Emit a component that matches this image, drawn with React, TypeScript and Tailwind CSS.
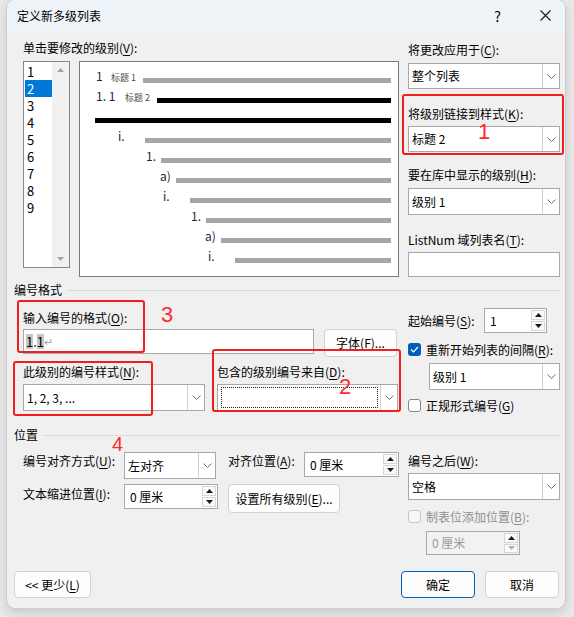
import type { ReactNode } from 'react'

const font = "font-['Noto_Sans_CJK_SC','Noto_Sans',sans-serif]"

// access key letter, underlined like the Win32 dialog
function K({ c }: { c: string }) {
  return <span className="underline underline-offset-[2px] decoration-1">{c}</span>
}

function Lbl({ children, className = '' }: { children: ReactNode; className?: string }) {
  return <div className={`h-[16px] leading-[16px] text-[12px] whitespace-nowrap ${className}`}>{children}</div>
}

function Chevron() {
  return (
    <svg width="9" height="5" viewBox="0 0 9 5">
      <polyline points="0.5 0.5 4.5 4.5 8.5 0.5" fill="none" stroke="#6e6e6e" strokeWidth="1" />
    </svg>
  )
}

function Combo({ value, className = '', focus = false }: { value?: string; className?: string; focus?: boolean }) {
  return (
    <div className={`flex bg-white border border-[#a8a8a8] ${className}`}>
      <div className="flex-1 flex items-center p-[2px] pl-[3px] text-[12px]">
        {focus ? <div className="w-full h-full border border-dotted border-[#222]" /> : value}
      </div>
      <div className="w-[17px] shrink-0 border-l border-[#d0d0d0] flex items-center justify-center">
        <Chevron />
      </div>
    </div>
  )
}

function Tri({ up, color = '#1a1a1a' }: { up?: boolean; color?: string }) {
  return (
    <svg width="7" height="4" viewBox="0 0 7 4">
      <polygon points={up ? '0,4 7,4 3.5,0' : '0,0 7,0 3.5,4'} fill={color} />
    </svg>
  )
}

function Spin({ value, className = '', disabled = false }: { value: string; className?: string; disabled?: boolean }) {
  return (
    <div className={`flex border border-[#a8a8a8] ${disabled ? 'bg-[#f2f2f2] text-[#9a9a9a]' : 'bg-white'} ${className}`}>
      <div className="flex-1 flex items-center pl-[5px] text-[12px]">{value}</div>
      <div className="w-[16px] flex flex-col gap-px p-px">
        <div className="flex-1 border border-[#d6d6d6] bg-[#fafafa] flex items-center justify-center"><Tri up /></div>
        <div className="flex-1 border border-[#d6d6d6] bg-[#fafafa] flex items-center justify-center">
          <Tri color={disabled ? '#b0b0b0' : '#1a1a1a'} />
        </div>
      </div>
    </div>
  )
}

function Check({ checked = false, disabled = false }: { checked?: boolean; disabled?: boolean }) {
  if (checked)
    return (
      <div className="w-[13px] h-[13px] rounded-[3px] bg-[#005fb8] flex items-center justify-center shrink-0">
        <svg width="9" height="7" viewBox="0 0 9 7">
          <polyline points="1 3.5 3.5 6 8 1" fill="none" stroke="white" strokeWidth="1.2" />
        </svg>
      </div>
    )
  return (
    <div className={`w-[13px] h-[13px] rounded-[3px] border shrink-0 ${disabled ? 'border-[#c6c6c6] bg-[#f7f7f7]' : 'border-[#858585] bg-white'}`} />
  )
}

function Btn({ children, className = '', primary = false }: { children: ReactNode; className?: string; primary?: boolean }) {
  return (
    <div className={`flex items-center justify-center bg-[#fdfdfd] border rounded-[4px] text-[12px] whitespace-nowrap ${primary ? 'border-[#005fb8]' : 'border-[#d2d2d2]'} ${className}`}>
      {children}
    </div>
  )
}

function Group({ title, className = '' }: { title: string; className?: string }) {
  return (
    <div className={`flex items-center pl-[7px] pr-[5px] h-[16px] ${className}`}>
      <span className="text-[12px] leading-[16px]">{title}</span>
      <div className="flex-1 h-px bg-[#dadada] ml-[5px]" />
    </div>
  )
}

function LevelList() {
  const levels = [1, 2, 3, 4, 5, 6, 7, 8, 9]
  return (
    <div className="w-[47px] h-[207px] bg-white border border-[#828790] flex">
      <div className="w-[28px] pt-px pl-px flex flex-col">
        {levels.map(n => (
          <div key={n} className={`h-[17px] leading-[17px] pl-[2px] text-[13px] ${n === 2 ? 'bg-[#0078d7] text-white' : ''}`}>{n}</div>
        ))}
      </div>
      <div className="w-[17px] bg-[#f0f0f0] flex flex-col justify-between items-center pt-[6px] pb-[6px]">
        <Tri up color="#a3a3a3" />
        <Tri color="#a3a3a3" />
      </div>
    </div>
  )
}

const rows = [
  { pl: 'pl-[16px]', num: '1', nw: 'w-[15px]', tag: '标题 1', black: false },
  { pl: 'pl-[16px]', num: '1. 1', nw: 'w-[29px]', tag: '标题 2', black: true },
  { pl: 'pl-[15px]', num: '', nw: '', tag: '', black: true },
  { pl: 'pl-[38px]', num: 'i.', nw: 'w-[27px]', tag: '', black: false },
  { pl: 'pl-[66px]', num: '1.', nw: 'w-[15px]', tag: '', black: false },
  { pl: 'pl-[80px]', num: 'a)', nw: 'w-[16px]', tag: '', black: false },
  { pl: 'pl-[83px]', num: 'i.', nw: 'w-[27px]', tag: '', black: false },
  { pl: 'pl-[111px]', num: '1.', nw: 'w-[15px]', tag: '', black: false },
  { pl: 'pl-[125px]', num: 'a)', nw: 'w-[16px]', tag: '', black: false },
  { pl: 'pl-[128px]', num: 'i.', nw: 'w-[27px]', tag: '', black: false },
]

function Preview() {
  return (
    <div className="w-[320px] h-[216px] bg-white border border-[#7a7a7a] pt-[6px] pr-[7px] flex flex-col">
      {rows.map((r, i) => (
        <div key={i} className={`flex items-start h-[20px] ${r.pl}`}>
          {r.num && <span className={`${r.nw} shrink-0 text-[12px] leading-[14px] mt-px text-[#1c2440]`}>{r.num}</span>}
          {r.tag && <span className="w-[32px] shrink-0 text-[9px] leading-[12px] mt-[4px] text-[#4a4a4a]">{r.tag}</span>}
          <div className={`flex-1 h-[5px] mt-[10px] ${r.black ? 'bg-black' : 'bg-[#a6a6a6]'}`} />
        </div>
      ))}
    </div>
  )
}

export default function App() {
  return (
    <div className={`w-[574px] h-[617px] bg-[#e9e9e9] pl-[7px] overflow-hidden text-black ${font}`}>
      <div className="relative w-[558px] h-[608px] bg-[#f0f0f0] rounded-[8px] shadow-[0_0_0_1px_#cdcdcd,0_4px_12px_rgba(0,0,0,0.16)] flex flex-col overflow-hidden">
        {/* title bar */}
        <div className="h-[31px] bg-[#eef3f8] flex items-center pl-[10px] pr-[14px] shrink-0">
          <span className="text-[12px]">定义新多级列表</span>
          <span className="ml-auto text-[14px] leading-none">?</span>
          <svg className="ml-[39px]" width="11" height="11" viewBox="0 0 11 11">
            <path d="M0.5 0.5 L10.5 10.5 M10.5 0.5 L0.5 10.5" stroke="#1a1a1a" strokeWidth="1.1" />
          </svg>
        </div>

        {/* levels + preview + link options */}
        <div className="flex pl-[16px] pt-[9px]">
          <div className="w-[376px] flex flex-col">
            <Lbl>单击要修改的级别(<K c="V" />):</Lbl>
            <div className="flex gap-[9px] mt-[5px]">
              <LevelList />
              <Preview />
            </div>
          </div>
          <div className="ml-[9px] w-[152px] flex flex-col pt-[2px]">
            <Lbl>将更改应用于(<K c="C" />):</Lbl>
            <Combo value="整个列表" className="mt-[5px] h-[26px]" />
            <Lbl className="mt-[17px]">将级别链接到样式(<K c="K" />):</Lbl>
            <Combo value="标题 2" className="mt-[4px] h-[26px]" />
            <Lbl className="mt-[15px]">要在库中显示的级别(<K c="H" />):</Lbl>
            <Combo value="级别 1" className="mt-[5px] h-[27px]" />
            <Lbl className="mt-[17px]">ListNum 域列表名(<K c="T" />):</Lbl>
            <div className="mt-[4px] h-[25px] bg-white border border-[#a8a8a8]" />
          </div>
        </div>

        <Group title="编号格式" className="mt-[5px]" />

        <div className="flex pl-[16px]">
          <div className="w-[376px] flex flex-col">
            <Lbl className="mt-[12px]">输入编号的格式(<K c="O" />):</Lbl>
            <div className="flex items-start gap-[10px] mt-[3px]">
              <div className="w-[291px] h-[25px] bg-white border border-[#a8a8a8] flex items-center pl-[2px] text-[13px] leading-[15px]">
                <span className="bg-[#c6c6c6]">1</span>
                <span>.</span>
                <span className="bg-[#c6c6c6]">1</span>
                <span className="text-[#a3a3a3] text-[11px]">↵</span>
              </div>
              <Btn className="w-[73px] h-[28px]">字体(<K c="F" />)...</Btn>
            </div>
            <div className="flex gap-[12px] mt-[7px]">
              <div className="w-[182px] flex flex-col">
                <Lbl>此级别的编号样式(<K c="N" />):</Lbl>
                <Combo value="1, 2, 3, ..." className="mt-[4px] h-[27px]" />
              </div>
              <div className="w-[181px] flex flex-col">
                <Lbl>包含的级别编号来自(<K c="D" />):</Lbl>
                <Combo focus className="mt-[4px] h-[27px]" />
              </div>
            </div>
          </div>
          <div className="ml-[9px] w-[152px] flex flex-col">
            <div className="flex items-center mt-[10px] h-[25px]">
              <Lbl className="w-[76px]">起始编号(<K c="S" />):</Lbl>
              <Spin value="1" className="w-[63px] h-[25px]" />
            </div>
            <div className="flex items-center gap-[5px] mt-[10px] h-[13px]">
              <Check checked />
              <Lbl>重新开始列表的间隔(<K c="R" />):</Lbl>
            </div>
            <Combo value="级别 1" className="ml-[21px] mt-[7px] h-[27px]" />
            <div className="flex items-center gap-[5px] mt-[9px] h-[13px]">
              <Check />
              <Lbl>正规形式编号(<K c="G" />)</Lbl>
            </div>
          </div>
        </div>

        <Group title="位置" className="mt-[15px]" />

        <div className="flex pl-[16px]">
          <div className="w-[376px] flex flex-col">
            <div className="flex items-start mt-[9px]">
              <Lbl className="w-[101px] mt-px">编号对齐方式(<K c="U" />):</Lbl>
              <Combo value="左对齐" className="w-[92px] h-[27px]" />
              <Lbl className="w-[76px] ml-[12px] mt-px">对齐位置(<K c="A" />):</Lbl>
              <Spin value="0 厘米" className="w-[95px] h-[25px]" />
            </div>
            <div className="flex items-start mt-[5px]">
              <Lbl className="w-[101px] mt-[2px]">文本缩进位置(<K c="I" />):</Lbl>
              <Spin value="0 厘米" className="w-[94px] h-[25px]" />
              <Btn className="w-[112px] h-[29px] ml-[10px]">设置所有级别(<K c="E" />)...</Btn>
            </div>
          </div>
          <div className="ml-[9px] w-[152px] flex flex-col">
            <Lbl className="mt-[10px]">编号之后(<K c="W" />):</Lbl>
            <Combo value="空格" className="mt-[4px] h-[27px]" />
            <div className="flex items-center gap-[5px] mt-[10px] h-[13px]">
              <Check disabled />
              <Lbl className="text-[#8f8f8f]">制表位添加位置(<K c="B" />):</Lbl>
            </div>
            <Spin value="0 厘米" disabled className="ml-[18px] mt-[8px] w-[94px] h-[24px]" />
          </div>
        </div>

        <div className="flex items-center mt-[16px] h-[27px] pl-[7px] pr-[6px]">
          <Btn className="w-[77px] h-[27px]">&lt;&lt; 更少(<K c="L" />)</Btn>
          <Btn primary className="w-[74px] h-[27px] ml-auto">确定</Btn>
          <Btn className="w-[74px] h-[27px] ml-[10px]">取消</Btn>
        </div>

        {/* red annotation marks drawn over the dialog */}
        <div className="absolute left-[395px] top-[94px] w-[162px] h-[61px] border-2 border-[#f01e1e] rounded-[3px]" />
        <div className="absolute left-[10px] top-[300px] w-[128px] h-[53px] border-2 border-[#f01e1e] rounded-[3px]" />
        <div className="absolute left-[6px] top-[361px] w-[140px] h-[55px] border-2 border-[#f01e1e] rounded-[3px]" />
        <div className="absolute left-[205px] top-[349px] w-[189px] h-[63px] border-2 border-[#f01e1e] rounded-[3px]" />
        <span className="absolute left-[471px] top-[121px] text-[22px] leading-[22px] text-[#ff2b2b] font-['Liberation_Sans',sans-serif]">1</span>
        <span className="absolute left-[154px] top-[304px] text-[22px] leading-[22px] text-[#ff2b2b] font-['Liberation_Sans',sans-serif]">3</span>
        <span className="absolute left-[332px] top-[376px] text-[22px] leading-[22px] text-[#ff2b2b] font-['Liberation_Sans',sans-serif]">2</span>
        <span className="absolute left-[105px] top-[434px] text-[20px] leading-[20px] text-[#ff2b2b] font-['Liberation_Sans',sans-serif]">4</span>
      </div>
    </div>
  )
}
